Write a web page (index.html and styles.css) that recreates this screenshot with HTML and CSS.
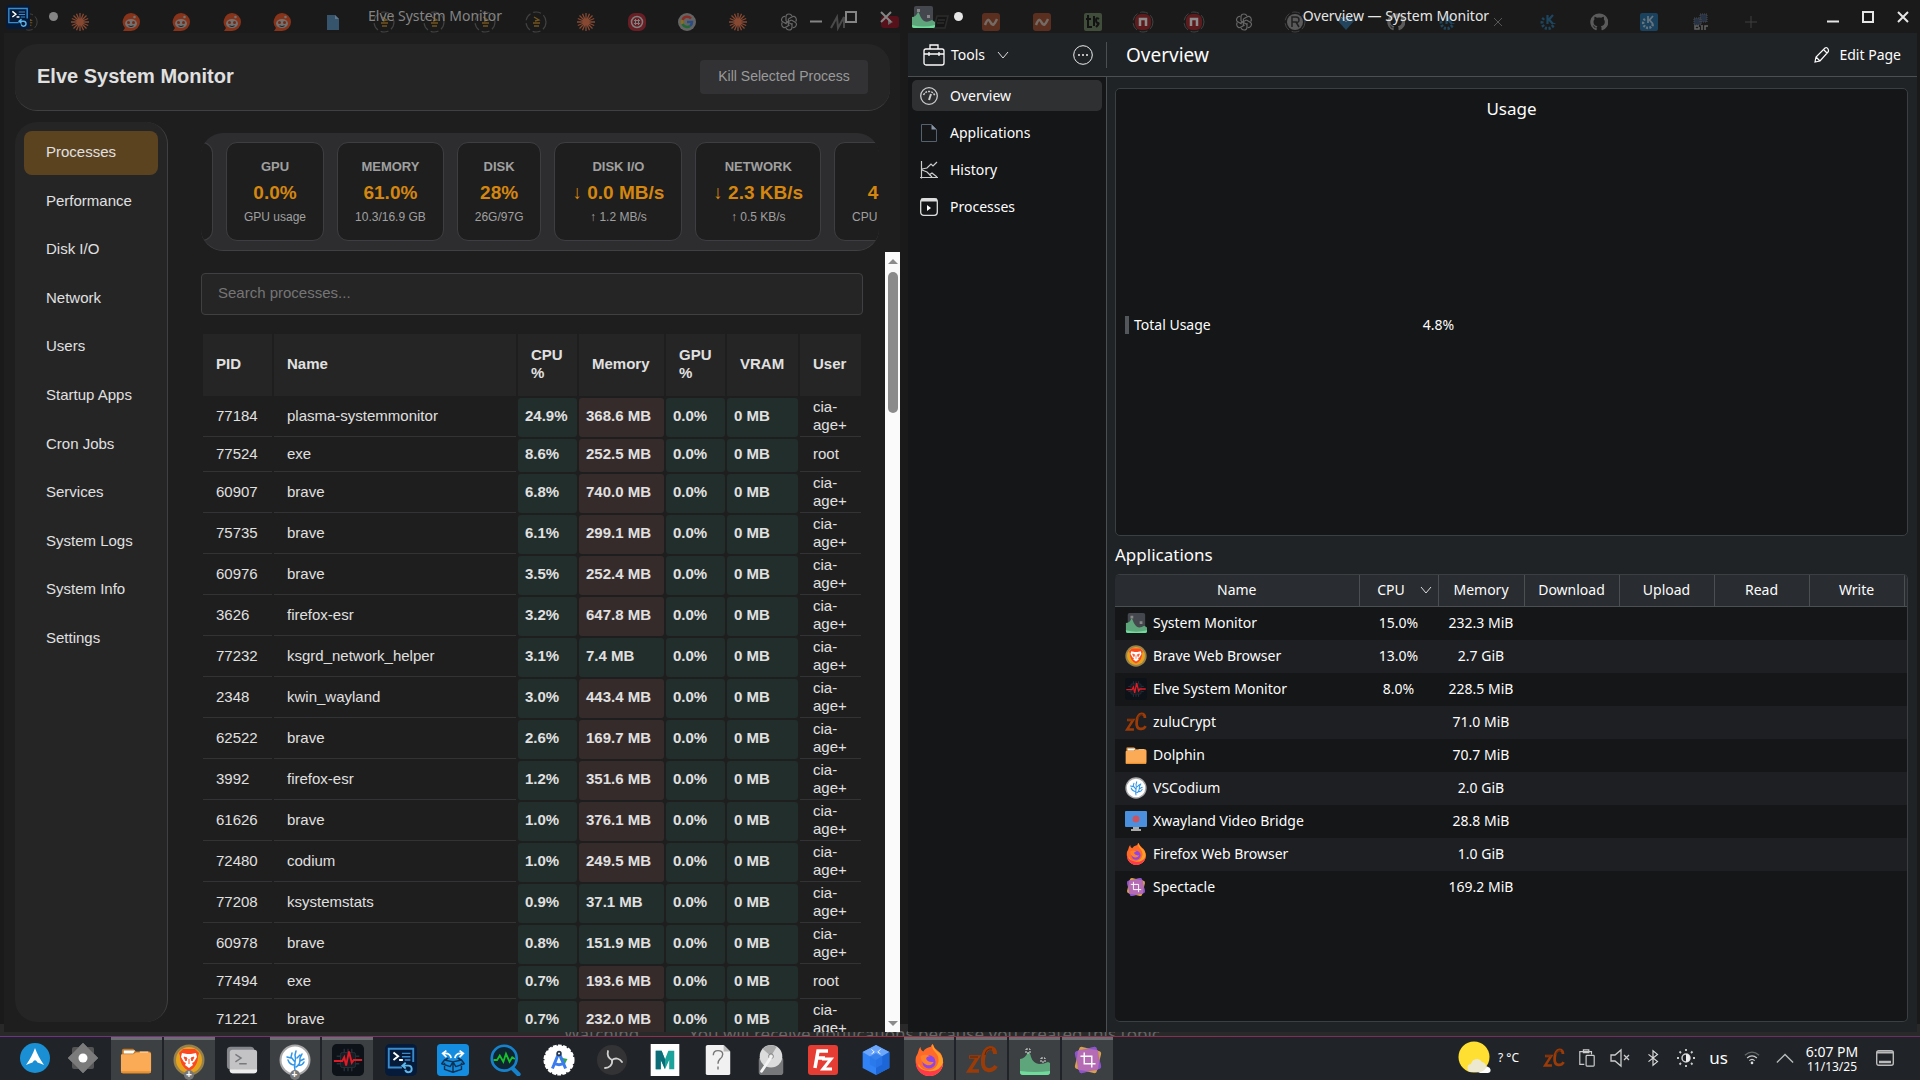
FILE: index.html
```html
<!DOCTYPE html>
<html lang="en">
<head>
<meta charset="utf-8">
<title>Desktop</title>
<link rel="stylesheet" href="styles.css">
</head>
<body>
<svg class="sprite" aria-hidden="true">
  <symbol id="claude" viewBox="0 0 18 18"><path d="M9 0v18M0 9h18M2.5 2.5l13 13M15.500 2.500l-13 13M5.500.8l7 16.400M12.500.8l-7 16.400M.8 5.500l16.400 7M.8 12.500l16.400-7" stroke="#a35438" stroke-width="1.300"/></symbol>
  <symbol id="reddit" viewBox="0 0 18 18"><path d="M9 0a9 9 0 1 1 0 18H1l2-3A9 9 0 0 1 9 0z" fill="#a33a1a"/><ellipse cx="9" cy="10.500" rx="6" ry="4.500" fill="#888"/><circle cx="6.500" cy="9.500" r="1.500" fill="#8f2f12"/><circle cx="11.500" cy="9.500" r="1.500" fill="#8f2f12"/><circle cx="12.500" cy="4" r="1.300" fill="#888"/><path d="M6.500 12.800q2.500 1.500 5 0" stroke="#222" fill="none"/></symbol>
  <symbol id="page" viewBox="0 0 18 18"><path d="M3 2h8l4 4v11H3z" fill="#3d6380"/><path d="M11 2v4h4z" fill="#6f8fa5"/></symbol>
  <symbol id="ring" viewBox="0 0 22 22"><circle cx="11" cy="11" r="10" fill="none" stroke="#4c4c4c" stroke-width="1.200" stroke-dasharray="8 3"/><path d="M9 6l5 3-4 1M8 12h7M9 15h5" stroke="#8a6420" stroke-width="1.300" fill="none"/></symbol>
  <symbol id="target" viewBox="0 0 18 18"><rect width="18" height="18" rx="7" fill="#7d2028"/><circle cx="9" cy="9" r="5.500" fill="none" stroke="#999" stroke-width="1.500"/><path d="M7.500 6v6M10.500 6v6M6 7.500h6M6 10.500h6" stroke="#999"/></symbol>
  <symbol id="google" viewBox="0 0 18 18"><circle cx="9" cy="9" r="9" fill="#777"/><g fill="none" stroke-width="2.500"><path d="M13 5.500A5 5 0 0 0 4.500 7" stroke="#a33027"/><path d="M4.500 7a5 5 0 0 0 0 4" stroke="#a98312"/><path d="M4.500 11a5 5 0 0 0 7.500 2" stroke="#247a3c"/><path d="M12 13a5 5 0 0 0 2-4H9" stroke="#2d599f"/></g></symbol>
  <symbol id="openai" viewBox="0 0 18 18"><g fill="none" stroke="#7b7b7b" stroke-width="1.200"><path d="M6 8V4q0-3 3-3 2 0 3 2M6 8l6 3.500"/><path d="M6 8V4q0-3 3-3 2 0 3 2M6 8l6 3.500" transform="rotate(60 9 9)"/><path d="M6 8V4q0-3 3-3 2 0 3 2M6 8l6 3.500" transform="rotate(120 9 9)"/><path d="M6 8V4q0-3 3-3 2 0 3 2" transform="rotate(180 9 9)"/><path d="M6 8V4q0-3 3-3 2 0 3 2" transform="rotate(240 9 9)"/><path d="M6 8V4q0-3 3-3 2 0 3 2" transform="rotate(300 9 9)"/></g></symbol>
  <symbol id="slashes" viewBox="0 0 18 18"><path d="M1 15L7 4l1 11 6-11v11" stroke="#555" stroke-width="2" fill="none"/></symbol>
  <symbol id="tube" viewBox="0 0 18 18"><rect y="3" width="18" height="12" rx="3" fill="#66101c"/><path d="M7 6l5 3-5 3z" fill="#777"/></symbol>
  <symbol id="book" viewBox="0 0 18 18"><path d="M5 3h11l-3 12H2zM6 7h7M5 10h7" stroke="#303030" stroke-width="1.500" fill="#151515"/></symbol>
  <symbol id="wave" viewBox="0 0 18 18"><rect width="18" height="18" rx="3" fill="#6b3521"/><path d="M3 12c3-8 4-5 6-2s3 2 6-4" stroke="#8c8078" stroke-width="2.500" fill="none"/></symbol>
  <symbol id="board" viewBox="0 0 18 18"><rect width="18" height="18" rx="2" fill="#4a5a44"/><path d="M4 2v12h4M2 6h5M10 3v10M15 6q-3-2-3 1t2 3-2 4" stroke="#111" stroke-width="2" fill="none"/></symbol>
  <symbol id="npm" viewBox="0 0 22 22"><circle cx="11" cy="11" r="10" fill="none" stroke="#4c4c4c" stroke-dasharray="8 3"/><rect x="3" y="3" width="16" height="16" rx="6" fill="#6e1c1e"/><path d="M8 15V8h6v7" stroke="#aaa" stroke-width="2.500" fill="none"/></symbol>
  <symbol id="rmark" viewBox="0 0 22 22"><circle cx="11" cy="11" r="8" fill="#6a6a6a"/><circle cx="11" cy="11" r="10" fill="none" stroke="#4c4c4c" stroke-dasharray="8 3"/><path d="M8 16V6h4q3 0 3 3t-3 2H8m4 0l3 5" stroke="#222" stroke-width="1.500" fill="none"/></symbol>
  <symbol id="gem" viewBox="0 0 18 18"><path d="M4 4h10l3 4-8 9-8-9z" fill="#24506e"/><path d="M4 4l5 5 5-5" stroke="#68808e" fill="none"/></symbol>
  <symbol id="github" viewBox="0 0 18 18"><path d="M9 .5a8.600 8.600 0 0 0-3 16.700c.5.100.7-.2.700-.5v-2c-2.500.5-3-1-3-1-.5-1.200-1.200-1.400-1.200-1.400 1.300-.2 2 1.200 2 1.200.8 1.300 2 1 2.400.7.100-.6.300-1 .6-1.200-2-.2-4-1-4-4.300q0-1.500 1-2.500-.4-1 .1-2.400s1-.2 2.400 1a8 8 0 0 1 4.300 0c1.500-1.200 2.400-1 2.400-1q.5 1.400.1 2.400 1 1 1 2.500c0 3.300-2 4-4 4.300.5.400.7 1 .7 1.800v2c0 .3.200.6.700.5A8.600 8.600 0 0 0 9 .5z" fill="#6c6c6c"/></symbol>
  <symbol id="kde" viewBox="0 0 18 18"><path d="M5 5a6 6 0 1 0 10 5" fill="none" stroke="#20506f" stroke-width="3" stroke-dasharray="2.200 1.500"/><path d="M8.500 2v9M14 2L10 6.500l4 4.500" stroke="#20506f" stroke-width="2.200" fill="none"/></symbol>
  <symbol id="kdebox" viewBox="0 0 18 18"><rect width="18" height="18" rx="2" fill="#1b4b6e"/><path d="M5 6a5 5 0 1 0 8 5" fill="none" stroke="#788b98" stroke-width="2.500" stroke-dasharray="2 1.300"/><path d="M8 3v7M13 3L9.500 7l3.500 4" stroke="#788b98" stroke-width="1.800" fill="none"/></symbol>
  <symbol id="gif" viewBox="0 0 18 18"><path d="M3 5h7v7H3zM9 1h7v8H9z" fill="#2c3850" stroke="#555" stroke-dasharray="1 1"/><path d="M8 13H4v3h4v-2M11 12v5M14 17v-4h3" stroke="#777" stroke-width="1.500" fill="none"/></symbol>
  <symbol id="cross" viewBox="0 0 12 12"><path d="M1 1l10 10M11 1L1 11" stroke="currentColor" stroke-width="2"/></symbol>
  <symbol id="thincross" viewBox="0 0 18 18"><path d="M5 5l8 8M13 5l-8 8" stroke="#666"/></symbol>
  <symbol id="plus" viewBox="0 0 18 18"><path d="M9 3v12M3 9h12" stroke="#484848"/></symbol>
  <symbol id="square" viewBox="0 0 12 12"><rect x="1" y="1" width="10" height="10" fill="none" stroke="currentColor" stroke-width="2"/></symbol>
  <symbol id="dash" viewBox="0 0 12 12"><path d="M0 10.500h12" stroke="currentColor" stroke-width="2"/></symbol>

  <symbol id="sysmon" viewBox="0 0 24 24"><rect x="3" y="1" width="19" height="19" rx="2" fill="#44484e"/><path d="M1 12q4 0 6-5l1 1q2 6 5 8t8-1l3 2v4q0 2-2 2H3q-2 0-2-2z" fill="#5ea57c"/><path d="M1 20q11 3 23 0v1q0 2-2 2H3q-2 0-2-2z" fill="#6fdc9c"/><path d="M6 4h3v3H6zM16 10h3v3h-3z" fill="#888"/></symbol>
  <symbol id="sysmonbare" viewBox="0 0 32 32"><path d="M1 15q5 0 8-7 2 0 3 5 2 6 8 7 5 0 9-2l2 1v9q0 3-3 3H4q-3 0-3-3z" fill="#5ea57c"/><path d="M1 27q15 2 30 0v1q0 3-3 3H4q-3 0-3-3z" fill="#6fdc9c"/><path d="M7 5h4v4H7zM22 14h4v4h-4z" fill="none" stroke="#ddd" stroke-dasharray="2 1"/></symbol>
  <symbol id="restore" viewBox="0 0 34 34"><rect width="34" height="34" rx="5" fill="#061b3a"/><path d="M30 19V5H4v20h14" fill="none" stroke="#3a8bcb" stroke-width="2"/><path d="M9 9l5 4-5 4M15 17h4" stroke="#fff" stroke-width="2" fill="none"/><path d="M18 10h9M18 13.500h9M21 17h6" stroke="#3a8bcb" stroke-width="1.500"/><path d="M19 23h6a3.500 3.500 0 1 1-3.500 4.500M22 20l-3.500 3 3.500 3" stroke="#5db5ea" stroke-width="2" fill="none"/></symbol>
  <symbol id="arch" viewBox="0 0 32 32"><circle cx="16" cy="16" r="15" fill="#1a8fd4"/><path d="M16 6c2 6 5 11 9 17q-4-2-6.500-2.500Q16 16 13.500 20.500 11 21 7 23c4-6 7-11 9-17z" fill="#fff"/></symbol>
  <symbol id="diamond" viewBox="0 0 32 32"><rect x="5" y="5" width="22" height="22" rx="2" fill="#555"/><path d="M16 1l15 15-15 15L1 16z" fill="#7b7b7b" stroke="#6b6b6b" stroke-linejoin="round"/><circle cx="16" cy="16" r="4.500" fill="#fff"/></symbol>
  <symbol id="folder" viewBox="0 0 34 30"><path d="M2 5q0-2 2-2h10l3 3h14q2 0 2 2v18H2z" fill="#bf7a2e"/><path d="M4 5h12l-2 3H4z" fill="#fff"/><path d="M21 6h9v2h-9z" fill="#ffe0b8"/><path d="M1 10q0-1 1-1h12l3-2h14q2 0 2 2v18q0 2-2 2H3q-2 0-2-2z" fill="#fbab55"/><path d="M1 27h32q0 2-2 2H3q-2 0-2-2z" fill="#e98f2c"/></symbol>
  <symbol id="brave" viewBox="0 0 32 32"><circle cx="16" cy="16" r="15.500" fill="#97824d"/><circle cx="16" cy="16" r="13" fill="#e6a41c"/><path d="M10 5h12l4 4-1 3c0 7-3 12-9 15-6-3-9-8-9-15L6 9z" fill="#fb4a22"/><path d="M9 9l5 1h4l5-1 1 4-3 5-2 1 1 2-4 3-4-3 1-2-2-1-3-5z" fill="#fff"/><path d="M11 13l3 1-1 3zM21 13l-3 1 1 3zM16 15v5" stroke="#fb4a22" fill="#fb4a22"/></symbol>
  <symbol id="terminal" viewBox="0 0 34 30"><rect x="1" y="1" width="29" height="24" rx="4" fill="#84868b"/><rect x="4" y="4" width="29" height="25" rx="3" fill="#c3c3c5"/><path d="M4 25h29v1q0 3-3 3H7q-3 0-3-3z" fill="#ededed"/><path d="M10 9l6 4-6 4M14 19h8" fill="none" stroke="#77797d" stroke-width="1.500"/></symbol>
  <symbol id="codium" viewBox="0 0 32 32"><circle cx="16" cy="16" r="15.500" fill="#a8a8a8"/><circle cx="16" cy="16" r="13.500" fill="#fff"/><path d="M16 26c-2-5 2-9 0-15l1-4M16 18l-4-5 1-4M12 14l-4-1M16 21c-4 0-6-2-7-5M17 23c4-2 4-5 4-9l2-4M21 17l4-2M19 21c3 1 5-1 6-3M18 14l3-3" stroke="#3095e8" stroke-width="1.500" fill="none" stroke-linecap="round"/></symbol>
  <symbol id="pulse" viewBox="0 0 34 34"><rect width="34" height="34" rx="5" fill="#0d1219"/><rect x="9" y="9" width="16" height="16" rx="2" fill="#171d24" stroke="#273039"/><path d="M13 5v4M17 5v4M21 5v4M13 25v4M17 25v4M21 25v4M5 13h4M5 21h4M25 13h4M25 21h4" stroke="#273039" stroke-width="1.500"/><path d="M2 18h9l2-4 2 9 3-15 3 12 2-3h9" fill="none" stroke="#e11b25" stroke-width="2"/></symbol>
  <symbol id="box" viewBox="0 0 34 34"><rect width="34" height="34" rx="4" fill="#148de0"/><g stroke="#0e3150" stroke-width="1.500" fill="none" stroke-linejoin="round"><path d="M8 20v7l9 3 9-3v-7M17 19v11M8 17l9 2 9-2-4-2M12 15l-4 2-3 4 9 3 3-5 3 5 9-3-3-4"/></g><path d="M15 15q-1-6-8-5M19 15q1-6 8-5M10 7l-4 3 4 4M24 7l4 3-4 4" stroke="#fff" stroke-width="1.800" fill="none"/></symbol>
  <symbol id="magwave" viewBox="0 0 36 36"><path d="M25 27l7 7" stroke="#1782cc" stroke-width="5" stroke-linecap="round"/><circle cx="16" cy="16" r="14" fill="#0f2530" stroke="#1782cc" stroke-width="3"/><path d="M4 18h4l3-5 4 7 3-9 4 9 3-5 3 2" stroke="#18c22c" stroke-width="2" fill="none"/></symbol>
  <symbol id="studio" viewBox="0 0 34 34"><circle cx="17" cy="17" r="15.500" fill="#fff" stroke="#fff" stroke-width="2" stroke-dasharray="4 1.500"/><path d="M17 14l9 2-4 8z" fill="#35a852"/><path d="M17 9L10 26M17 9l7 17M11 20q6 4 12 0" stroke="#3b7ded" stroke-width="3.200" fill="none"/><circle cx="17" cy="10" r="2" fill="#fff" stroke="#25364c" stroke-width="1.800"/></symbol>
  <symbol id="obs" viewBox="0 0 32 32"><circle cx="16" cy="16" r="15" fill="#333335"/><g fill="none" stroke="#d1d1d1" stroke-width="1.800" stroke-linecap="round"><path d="M16 16c-4-2-5-5-4-9"/><path d="M16 16c4-3 8-1 10 2"/><path d="M16 16c1 5-3 8-7 8"/></g></symbol>
  <symbol id="maya" viewBox="0 0 34 38"><path d="M0 0h34v38H0z" fill="#fff"/><path d="M6 8h7l4 10 4-10h7v22h-6V19l-5 11-5-11v11H6z" fill="#1ba39c"/><path d="M6 8h7l4 10v12l-5-11v11H6z" fill="#0c6d79"/></symbol>
  <symbol id="unknown" viewBox="0 0 28 34"><path d="M1 3q0-2 2-2h17l7 7v23q0 2-2 2H3q-2 0-2-2z" fill="#f1f1f1"/><path d="M20 1v7h7z" fill="#bbb"/><path d="M9 12q0-5 5-5t5 4q0 3-3 5-2 2-2 5M14 24v3" stroke="#777" stroke-width="1.500" fill="none"/></symbol>
  <symbol id="disk" viewBox="0 0 28 34"><rect x="1" y="14" width="26" height="19" rx="3" fill="#77787a"/><circle cx="14" cy="13" r="12" fill="#dcdcdc"/><path d="M14 13L5 5A12 12 0 0 1 20 3z" fill="#aaa"/><circle cx="14" cy="13" r="2.500" fill="#eee" stroke="#777"/><path d="M14 14L4 29" stroke="#f3f3f3" stroke-width="3" stroke-linecap="round"/></symbol>
  <symbol id="filezilla" viewBox="0 0 32 32"><rect x="1" y="1" width="30" height="30" rx="3" fill="#e53c34"/><path d="M8 24l3-17h10M10 14h8" stroke="#fff" stroke-width="3.500" fill="none"/><path d="M15 15h9l-8 10h9" stroke="#fff" stroke-width="3" fill="none"/></symbol>
  <symbol id="cube" viewBox="0 0 32 36"><path d="M16 1l15 8v18l-15 8-15-8V9z" fill="#3183f5"/><path d="M16 1l15 8-15 9L1 9z" fill="#6ba6fb"/><path d="M16 18l15-9v18l-15 8z" fill="#1d66d8"/><path d="M9 14l7-4 7 4v9l-7 4-7-4z" fill="#2b78ea" opacity=".8"/><path d="M11 6l3 3-3 2M21 6l-3 3 3 2" stroke="#fff" fill="none"/></symbol>
  <symbol id="firefox" viewBox="0 0 32 34"><path d="M4 10q1-5 3-7 0 4 3 5 2-4 8-5 0-2 2-3 1 4 5 7 6 4 6 12a14 14 0 0 1-29 1Q1 14 4 10z" fill="#ff6a2b"/><path d="M20 0q-2 4 2 8 5 5 4 11-2 8-10 9-8 0-11-7-1 5 2 9a14.500 14.500 0 0 0 24-10q0-8-6-12-4-3-5-8z" fill="#ff9e26"/><path d="M2 19a14.500 14.500 0 0 0 29 1q-3 9-14 9Q5 28 2 19z" fill="#ff3b4b"/><circle cx="16" cy="19" r="7" fill="#8e46e8"/><path d="M7 13q5-3 10 0-4 0-4 3 2 4 8 3-3 5-8 3-6-3-6-9z" fill="#ff8129"/></symbol>
  <symbol id="zc" viewBox="0 0 32 30"><path d="M3 12h9L3 26h10" stroke="#9b3b08" stroke-width="3.500" fill="none"/><path d="M29 9q0-6-5-6-6 1-7 11t5 11q5 1 8-4" stroke="#9b3b08" stroke-width="4" fill="none"/><path d="M4 12h8M26 4q-6-1-7 6" stroke="#5e2205" fill="none"/></symbol>
  <symbol id="spectacle" viewBox="0 0 34 34"><rect x="5" y="5" width="24" height="24" rx="3" fill="#8d54cf" transform="rotate(-14 17 17)"/><rect x="5" y="5" width="24" height="24" rx="3" fill="#d6a04e" transform="rotate(14 17 17)"/><rect x="5" y="5" width="24" height="24" rx="3" fill="#8d54cf" transform="rotate(-14 17 17)" opacity=".6"/><rect x="6" y="6" width="22" height="22" rx="3" fill="#b56cb4"/><path d="M13 9v12h12M9 13h12v12" stroke="#fff" stroke-width="1.500" fill="none"/></symbol>
  <symbol id="bridge" viewBox="0 0 22 22"><path d="M8 16h6v3h2v2H6v-2h2z" fill="#aaa"/><rect y="1" width="22" height="16" rx="1" fill="#4b90df"/><circle cx="11" cy="9" r="3.500" fill="#cb5462"/></symbol>

  <symbol id="toolbox" viewBox="0 0 22 22"><g fill="none" stroke="#fcfcfc" stroke-width="1.300"><rect x="1" y="5" width="20" height="16" rx="2"/><path d="M7 5V1h8v4M1 10h20M6 8v4M16 8v4"/></g></symbol>
  <symbol id="chevron" viewBox="0 0 12 12"><path d="M1 3l5 6 5-6" stroke="#ddd" fill="none"/></symbol>
  <symbol id="dots" viewBox="0 0 20 20"><circle cx="10" cy="10" r="9.300" stroke="#eee" fill="none"/><path d="M5 10h2M9 10h2M13 10h2" stroke="#eee" stroke-width="1.500"/></symbol>
  <symbol id="pencil" viewBox="0 0 16 16"><path d="M1 15l1-5L11 1q2-1 3 1t0 3L6 14zM2 10l4 4M10 3l3 3" stroke="#fcfcfc" fill="none" stroke-width="1.200"/></symbol>
  <symbol id="gauge" viewBox="0 0 18 18"><g fill="none" stroke="#ccc"><circle cx="9" cy="9" r="8.300" stroke-width="1.300"/><path d="M3.500 8q2-4 6-3.500T15 9" stroke-width="1.500" stroke-dasharray="2 1"/><path d="M9 13l2-6" stroke-width="2"/></g></symbol>
  <symbol id="sheet" viewBox="0 0 18 18"><path d="M1.500.5h10l5 5v12h-15z" fill="none" stroke="#556170"/><path d="M11.500.5l5 5h-5z" fill="#8795a7"/></symbol>
  <symbol id="chart" viewBox="0 0 18 18"><path d="M1.500 0v17.500M0 16.500h18M2 8l5-1 4-4 2 2 4-4M2 9l5 2 5 5M9 14l3-2 5 4" stroke="#ccc" fill="none" stroke-width="1.200"/></symbol>
  <symbol id="play" viewBox="0 0 18 18"><rect x=".7" y=".7" width="16.600" height="16.600" rx="3" stroke="#ddd" fill="none" stroke-width="1.300"/><path d="M1 2h16" stroke="#ddd" stroke-width="3"/><path d="M7 7l4 3-4 3z" fill="#fff"/></symbol>

  <symbol id="sun" viewBox="0 0 34 34"><circle cx="16" cy="16" r="15.500" fill="#ffdf31"/><path d="M14 31a4 4 0 0 1-1-8 6 6 0 0 1 11-2 5 5 0 0 1 4 4 3.500 3.500 0 0 1 2 6z" fill="#ede9d0"/><path d="M16 32q9 0 13-6a3 3 0 0 1 1 6z" fill="#fff"/></symbol>
  <symbol id="clip" viewBox="0 0 18 20"><g fill="none" stroke="#ccc" stroke-width="1.300"><path d="M6 17H1V3h13v3M5 1h6v3H5z"/><rect x="8" y="7" width="9" height="12" rx="1"/></g></symbol>
  <symbol id="mute" viewBox="0 0 20 20"><path d="M1 7h4l6-5v16l-6-5H1zM14 7l5 5M19 7l-5 5" fill="none" stroke="#ccc" stroke-width="1.300"/></symbol>
  <symbol id="bluetooth" viewBox="0 0 14 20"><path d="M2 6l10 8-5 4V2l5 4-10 8" fill="none" stroke="#ddd" stroke-width="1.300"/></symbol>
  <symbol id="bright" viewBox="0 0 20 20"><circle cx="10" cy="10" r="4" fill="none" stroke="#ccc" stroke-width="1.500"/><path d="M10 6a4 4 0 0 1 0 8z" fill="#eee"/><path d="M10 1v2M10 17v2M1 10h2M17 10h2M3.500 3.500l1.500 1.500M15 15l1.500 1.500M16.500 3.500L15 5M5 15l-1.500 1.500" stroke="#ccc" stroke-width="1.800"/></symbol>
  <symbol id="wifi" viewBox="0 0 18 16"><g fill="none" stroke-width="1.400"><path d="M1 5q8-7 16 0" stroke="#666"/><path d="M3.500 8q5.500-5 11 0M6 11q3-3 6 0" stroke="#ccc"/></g><circle cx="9" cy="13.500" r="1.500" fill="#ddd"/></symbol>
  <symbol id="up" viewBox="0 0 20 12"><path d="M1 11l9-9 9 9" fill="none" stroke="#bbb" stroke-width="1.500"/></symbol>
  <symbol id="peek" viewBox="0 0 18 16"><rect x=".7" y=".7" width="16.600" height="14.600" rx="2" fill="none" stroke="#bbb" stroke-width="1.400"/><path d="M1 2.500h16" stroke="#bbb" stroke-width="2"/><path d="M3 12h12" stroke="#bbb" stroke-width="2.500"/></symbol>
</svg>

<div class="backdrop" aria-hidden="true">
  <div class="tabs">
    <svg><use href="#ring"/></svg><svg><use href="#claude"/></svg><svg><use href="#reddit"/></svg><svg><use href="#reddit"/></svg><svg><use href="#reddit"/></svg><svg><use href="#reddit"/></svg><svg><use href="#page"/></svg><svg class="big"><use href="#ring"/></svg><svg class="big"><use href="#ring"/></svg><svg class="big"><use href="#ring"/></svg><svg class="big"><use href="#ring"/></svg><svg><use href="#claude"/></svg><svg><use href="#target"/></svg><svg><use href="#google"/></svg><svg><use href="#claude"/></svg><svg><use href="#openai"/></svg><svg><use href="#slashes"/></svg><svg><use href="#tube"/></svg><svg><use href="#book"/></svg><svg><use href="#wave"/></svg><svg><use href="#wave"/></svg><svg><use href="#board"/></svg><svg class="big"><use href="#npm"/></svg><svg class="big"><use href="#npm"/></svg><svg><use href="#openai"/></svg><svg class="big"><use href="#rmark"/></svg><svg><use href="#gem"/></svg><svg><use href="#github"/></svg><svg><use href="#kde"/></svg><svg><use href="#thincross"/></svg><svg><use href="#kde"/></svg><svg><use href="#github"/></svg><svg><use href="#kdebox"/></svg><svg><use href="#gif"/></svg><svg><use href="#plus"/></svg>
  </div>
  <div class="notice"><span>Watching&nbsp; ⌄</span><span>You will receive notifications because you created this topic.</span></div>
</div>

<main class="desktop">
  <section class="window elve">
    <header class="titlebar dim">
      <svg class="app"><use href="#restore"/></svg>
      <span class="pin"></span>
      <span class="caption">Elve System Monitor</span>
      <button aria-label="Minimize"><svg><use href="#dash"/></svg></button>
      <button aria-label="Maximize"><svg><use href="#square"/></svg></button>
      <button aria-label="Close"><svg><use href="#cross"/></svg></button>
    </header>
    <div class="elve-body">
      <div class="elve-head"><h1>Elve System Monitor</h1><button class="kill">Kill Selected Process</button></div>
      <div class="elve-main">
        <div class="elve-side">
          <nav class="elve-nav">
            <a class="on" href="#">Processes</a><a href="#">Performance</a><a href="#">Disk I/O</a><a href="#">Network</a><a href="#">Users</a><a href="#">Startup Apps</a><a href="#">Cron Jobs</a><a href="#">Services</a><a href="#">System Logs</a><a href="#">System Info</a><a href="#">Settings</a>
          </nav>
        </div>
        <div class="elve-content">
          <div class="stats">
            <div class="stat edge"></div>
            <div class="stat"><h2>GPU</h2><b>0.0%</b><span>GPU usage</span></div>
            <div class="stat"><h2>MEMORY</h2><b>61.0%</b><span>10.3/16.9 GB</span></div>
            <div class="stat"><h2>DISK</h2><b>28%</b><span>26G/97G</span></div>
            <div class="stat"><h2>DISK I/O</h2><b>↓ 0.0 MB/s</b><span>↑ 1.2 MB/s</span></div>
            <div class="stat"><h2>NETWORK</h2><b>↓ 2.3 KB/s</b><span>↑ 0.5 KB/s</span></div>
            <div class="stat last"><h2>&nbsp;</h2><b>4</b><span>CPU</span></div>
          </div>
          <div class="scroll">
            <div class="list">
              <input class="search" type="text" placeholder="Search processes..." aria-label="Search processes">
              <table class="procs">
                <colgroup><col class="c-pid"><col><col class="c-pct"><col class="c-mem"><col class="c-pct"><col class="c-vram"><col class="c-user"></colgroup>
                <thead><tr><th>PID</th><th>Name</th><th>CPU %</th><th>Memory</th><th>GPU %</th><th>VRAM</th><th>User</th></tr></thead>
                <tbody>
                  <tr><td>77184</td><td>plasma-systemmonitor</td><td class="lo">24.9%</td><td class="hi">368.6 MB</td><td class="lo">0.0%</td><td class="lo">0 MB</td><td>cia-age+</td></tr>
                  <tr><td>77524</td><td>exe</td><td class="lo">8.6%</td><td class="hi">252.5 MB</td><td class="lo">0.0%</td><td class="lo">0 MB</td><td>root</td></tr>
                  <tr><td>60907</td><td>brave</td><td class="lo">6.8%</td><td class="hi">740.0 MB</td><td class="lo">0.0%</td><td class="lo">0 MB</td><td>cia-age+</td></tr>
                  <tr><td>75735</td><td>brave</td><td class="lo">6.1%</td><td class="hi">299.1 MB</td><td class="lo">0.0%</td><td class="lo">0 MB</td><td>cia-age+</td></tr>
                  <tr><td>60976</td><td>brave</td><td class="lo">3.5%</td><td class="hi">252.4 MB</td><td class="lo">0.0%</td><td class="lo">0 MB</td><td>cia-age+</td></tr>
                  <tr><td>3626</td><td>firefox-esr</td><td class="lo">3.2%</td><td class="hi">647.8 MB</td><td class="lo">0.0%</td><td class="lo">0 MB</td><td>cia-age+</td></tr>
                  <tr><td>77232</td><td>ksgrd_network_helper</td><td class="lo">3.1%</td><td class="lo">7.4 MB</td><td class="lo">0.0%</td><td class="lo">0 MB</td><td>cia-age+</td></tr>
                  <tr><td>2348</td><td>kwin_wayland</td><td class="lo">3.0%</td><td class="hi">443.4 MB</td><td class="lo">0.0%</td><td class="lo">0 MB</td><td>cia-age+</td></tr>
                  <tr><td>62522</td><td>brave</td><td class="lo">2.6%</td><td class="hi">169.7 MB</td><td class="lo">0.0%</td><td class="lo">0 MB</td><td>cia-age+</td></tr>
                  <tr><td>3992</td><td>firefox-esr</td><td class="lo">1.2%</td><td class="hi">351.6 MB</td><td class="lo">0.0%</td><td class="lo">0 MB</td><td>cia-age+</td></tr>
                  <tr><td>61626</td><td>brave</td><td class="lo">1.0%</td><td class="hi">376.1 MB</td><td class="lo">0.0%</td><td class="lo">0 MB</td><td>cia-age+</td></tr>
                  <tr><td>72480</td><td>codium</td><td class="lo">1.0%</td><td class="hi">249.5 MB</td><td class="lo">0.0%</td><td class="lo">0 MB</td><td>cia-age+</td></tr>
                  <tr><td>77208</td><td>ksystemstats</td><td class="lo">0.9%</td><td class="lo">37.1 MB</td><td class="lo">0.0%</td><td class="lo">0 MB</td><td>cia-age+</td></tr>
                  <tr><td>60978</td><td>brave</td><td class="lo">0.8%</td><td class="lo">151.9 MB</td><td class="lo">0.0%</td><td class="lo">0 MB</td><td>cia-age+</td></tr>
                  <tr><td>77494</td><td>exe</td><td class="lo">0.7%</td><td class="hi">193.6 MB</td><td class="lo">0.0%</td><td class="lo">0 MB</td><td>root</td></tr>
                  <tr><td>71221</td><td>brave</td><td class="lo">0.7%</td><td class="hi">232.0 MB</td><td class="lo">0.0%</td><td class="lo">0 MB</td><td>cia-age+</td></tr>
                </tbody>
              </table>
            </div>
            <div class="bar"><i class="arrow-up"></i><i class="thumb"></i><i class="arrow-down"></i></div>
          </div>
        </div>
      </div>
    </div>
  </section>

  <div class="between" aria-hidden="true"></div>

  <section class="window plasma">
    <header class="titlebar">
      <svg class="app"><use href="#sysmon"/></svg>
      <span class="pin"></span>
      <span class="caption">Overview — System Monitor</span>
      <button aria-label="Minimize"><svg><use href="#dash"/></svg></button>
      <button aria-label="Maximize"><svg><use href="#square"/></svg></button>
      <button aria-label="Close"><svg><use href="#cross"/></svg></button>
    </header>
    <div class="plasma-body">
      <div class="toolbar">
        <div class="tools">
          <button class="flat"><svg class="i22"><use href="#toolbox"/></svg>Tools<svg class="i12"><use href="#chevron"/></svg></button>
          <button class="flat" aria-label="More"><svg class="i20"><use href="#dots"/></svg></button>
        </div>
        <h1>Overview</h1>
        <button class="flat edit"><svg class="i16"><use href="#pencil"/></svg>Edit Page</button>
      </div>
      <div class="plasma-main">
        <nav class="plasma-nav">
          <a class="on" href="#"><svg class="i18"><use href="#gauge"/></svg>Overview</a>
          <a href="#"><svg class="i18"><use href="#sheet"/></svg>Applications</a>
          <a href="#"><svg class="i18"><use href="#chart"/></svg>History</a>
          <a href="#"><svg class="i18"><use href="#play"/></svg>Processes</a>
        </nav>
        <div class="page">
          <div class="usage">
            <h2>Usage</h2>
            <div class="legend"><i></i><span>Total Usage</span><span>4.8%</span></div>
          </div>
          <h2 class="apps-title">Applications</h2>
          <div class="apps-frame">
            <table class="apps">
              <colgroup><col><col class="a-cpu"><col class="a-mem"><col class="a-io"><col class="a-io"><col class="a-io"><col class="a-io"><col class="a-end"></colgroup>
              <thead><tr><th>Name</th><th><span class="sort">CPU<svg class="i12"><use href="#chevron"/></svg></span></th><th>Memory</th><th>Download</th><th>Upload</th><th>Read</th><th>Write</th><th></th></tr></thead>
              <tbody>
                <tr><td><svg><use href="#sysmon"/></svg>System Monitor</td><td>15.0%</td><td>232.3 MiB</td><td colspan="5"></td></tr>
                <tr><td><svg><use href="#brave"/></svg>Brave Web Browser</td><td>13.0%</td><td>2.7 GiB</td><td colspan="5"></td></tr>
                <tr><td><svg><use href="#pulse"/></svg>Elve System Monitor</td><td>8.0%</td><td>228.5 MiB</td><td colspan="5"></td></tr>
                <tr><td><svg><use href="#zc"/></svg>zuluCrypt</td><td></td><td>71.0 MiB</td><td colspan="5"></td></tr>
                <tr><td><svg><use href="#folder"/></svg>Dolphin</td><td></td><td>70.7 MiB</td><td colspan="5"></td></tr>
                <tr><td><svg><use href="#codium"/></svg>VSCodium</td><td></td><td>2.0 GiB</td><td colspan="5"></td></tr>
                <tr><td><svg><use href="#bridge"/></svg>Xwayland Video Bridge</td><td></td><td>28.8 MiB</td><td colspan="5"></td></tr>
                <tr><td><svg><use href="#firefox"/></svg>Firefox Web Browser</td><td></td><td>1.0 GiB</td><td colspan="5"></td></tr>
                <tr><td><svg><use href="#spectacle"/></svg>Spectacle</td><td></td><td>169.2 MiB</td><td colspan="5"></td></tr>
              </tbody>
            </table>
          </div>
        </div>
      </div>
    </div>
  </section>
</main>

<footer class="taskbar">
  <button class="launch" aria-label="Application launcher"><svg class="i32"><use href="#arch"/></svg></button>
  <button class="launch" aria-label="Show windows"><svg class="i32"><use href="#diamond"/></svg></button>
  <div class="tasks">
    <button class="open" aria-label="Dolphin"><svg><use href="#folder"/></svg></button>
    <button class="open many" aria-label="Brave"><svg><use href="#brave"/></svg></button>
    <button aria-label="Konsole"><svg><use href="#terminal"/></svg></button>
    <button class="open many" aria-label="VSCodium"><svg><use href="#codium"/></svg></button>
    <button class="open" aria-label="Elve System Monitor"><svg><use href="#pulse"/></svg></button>
    <button aria-label="Restore"><svg><use href="#restore"/></svg></button>
    <button aria-label="Archive box"><svg><use href="#box"/></svg></button>
    <button aria-label="System activity"><svg><use href="#magwave"/></svg></button>
    <button aria-label="Android Studio"><svg><use href="#studio"/></svg></button>
    <button aria-label="OBS Studio"><svg><use href="#obs"/></svg></button>
    <button aria-label="Maya"><svg><use href="#maya"/></svg></button>
    <button aria-label="Unknown file"><svg><use href="#unknown"/></svg></button>
    <button aria-label="Disks"><svg><use href="#disk"/></svg></button>
    <button aria-label="FileZilla"><svg><use href="#filezilla"/></svg></button>
    <button aria-label="Virtual box"><svg><use href="#cube"/></svg></button>
    <button class="open" aria-label="Firefox"><svg><use href="#firefox"/></svg></button>
    <button class="open" aria-label="zuluCrypt"><svg><use href="#zc"/></svg></button>
    <button class="open" aria-label="System Monitor"><svg><use href="#sysmonbare"/></svg></button>
    <button class="open" aria-label="Spectacle"><svg><use href="#spectacle"/></svg></button>
  </div>
  <div class="tray">
    <div class="weather"><svg class="i34"><use href="#sun"/></svg>? °C</div>
    <span><svg class="i22"><use href="#zc"/></svg></span>
    <span><svg class="i18"><use href="#clip"/></svg></span>
    <span><svg class="i20"><use href="#mute"/></svg></span>
    <span><svg class="i18"><use href="#bluetooth"/></svg></span>
    <span><svg class="i20"><use href="#bright"/></svg></span>
    <span class="kb">us</span>
    <span><svg class="i16"><use href="#wifi"/></svg></span>
    <span><svg class="i18"><use href="#up"/></svg></span>
    <div class="clock"><b>6:07 PM</b><small>11/13/25</small></div>
    <button class="peek" aria-label="Show desktop"><svg class="i18"><use href="#peek"/></svg></button>
  </div>
</footer>
</body>
</html>
```
FILE: styles.css
```css
* { box-sizing: border-box; }

body {
  margin: 0;
  height: 100vh;
  display: flex;
  flex-direction: column;
  overflow: hidden;
  background: #1a1a1a;
  color: #fcfcfc;
  font: 14px/20px "Noto Sans", sans-serif;
}

h1, h2 { margin: 0; font-weight: normal; }
a { color: inherit; text-decoration: none; }
button { border: 0; padding: 0; background: none; color: inherit; font: inherit; }
svg { display: block; flex: none; }
.sprite { position: absolute; width: 0; height: 0; }
.i12 { width: 12px; height: 12px; }
.i16 { width: 16px; height: 16px; }
.i18 { width: 18px; height: 18px; }
.i20 { width: 20px; height: 20px; }
.i22 { width: 22px; height: 22px; }
.i32 { width: 32px; height: 32px; }
.i34 { width: 34px; height: 34px; }

/* browser window showing through behind the two monitors */
.backdrop {
  position: absolute;
  inset: 0 0 44px;
  display: flex;
  flex-direction: column;
  justify-content: space-between;
  overflow: hidden;
}
.tabs {
  display: grid;
  grid-template-columns: repeat(35, 1fr);
  place-items: center;
  width: 1772px;
  height: 44px;
  margin-left: 4px;
  opacity: .8;
}
.tabs svg { width: 18px; height: 18px; }
.tabs .big { width: 22px; height: 22px; }
.notice {
  display: flex;
  gap: 27px;
  height: 12px;
  padding-left: 564px;
  background: #292929;
  color: #666;
  font-size: 17px;
  line-height: 20px;
}

.desktop {
  position: relative;
  flex: 1;
  min-height: 0;
  display: grid;
  grid-template-columns: 903fr 2px 1015fr;
  padding-bottom: 4px;
}
.window { display: flex; flex-direction: column; min-width: 0; min-height: 0; }
.between { margin-top: 33px; }

.titlebar { display: flex; align-items: center; height: 33px; color: #e6e6e6; }
.titlebar .app { width: 24px; height: 24px; margin: 0 6px; }
.titlebar .pin { width: 9px; height: 9px; margin: 0 14px 0 13px; border-radius: 50%; background: currentColor; }
.titlebar .caption { flex: 1; padding-bottom: 2px; text-align: center; }
.titlebar button { display: grid; place-items: center; width: 35px; height: 33px; }
.titlebar button svg { width: 12px; height: 12px; }
.titlebar.dim { color: #858585; }

/* Elve System Monitor */
.elve-body {
  flex: 1;
  min-height: 0;
  display: flex;
  flex-direction: column;
  margin: 0 3px 0 4px;
  background: #1e1e1e;
  color: #e0e0e0;
  font: 15px/18px "Liberation Sans", sans-serif;
}
.elve-head {
  display: flex;
  align-items: center;
  justify-content: space-between;
  height: 67px;
  margin: 11px 10px 0 11px;
  padding: 0 22px;
  border-bottom: 1px solid #404042;
  border-radius: 22px;
  background: #252526;
}
.elve-head h1 { padding-bottom: 2px; font-size: 20px; font-weight: bold; }
.kill { width: 168px; height: 34px; padding-bottom: 2px; border-radius: 4px; background: #323235; color: #9a9a9a; font-size: 14px; }
.elve-main { flex: 1; min-height: 0; display: flex; }
.elve-side {
  width: 153px;
  margin: 11px 0 10px 11px;
  padding: 9px;
  border-right: 1px solid #404042;
  border-radius: 22px;
  background: #252526;
}
.elve-nav { display: flex; flex-direction: column; justify-content: space-between; height: 530px; }
.elve-nav a { padding: 12px 22px 14px; line-height: 18px; border-radius: 8px; }
.elve-nav .on { background: #5c4320; }
.elve-content { flex: 1; min-width: 0; display: flex; flex-direction: column; padding: 22px 0 0 33px; }
.stats {
  display: flex;
  gap: 13px;
  height: 118px;
  margin: 0 21px 1px 0;
  padding: 9px 0;
  overflow: hidden;
  border-bottom: 1px solid #404042;
  border-radius: 22px;
  background: #2d2d30;
}
.stat {
  flex: none;
  display: flex;
  flex-direction: column;
  align-items: center;
  padding: 15px 17px;
  border: 1px solid #3e3e42;
  border-radius: 11px;
  background: #1e1e1e;
  color: #a0a0a0;
  font-size: 12px;
}
.stat h2 { font-size: 13px; line-height: 18px; font-weight: bold; }
.stat b { color: #d5860f; font-size: 19px; line-height: 34px; margin: 0 0 -2px; }
.edge { width: 12px; padding: 0; border-left: 0; border-radius: 0 11px 11px 0; }
.last { width: 78px; }
.last span { align-self: flex-start; }
.scroll { flex: 1; min-height: 0; display: flex; overflow: hidden; }
.list { flex: 1; min-width: 0; padding: 21px 22px 0 0; }
.search {
  display: block;
  width: 100%;
  height: 42px;
  padding: 0 16px 4px;
  border: 1px solid #404042;
  border-radius: 4px;
  background: #252526;
  color: #e0e0e0;
  font: inherit;
}
.search::placeholder { color: #757575; opacity: 1; }
.procs { width: 100%; margin-top: 17px; table-layout: fixed; border-collapse: separate; border-spacing: 2px; }
.c-pid { width: 69px; }
.c-pct { width: 59px; }
.c-mem { width: 85px; }
.c-vram { width: 71px; }
.c-user { width: 61px; }
.procs th { height: 62px; padding: 0 12px 3px 13px; background: #252526; text-align: left; }
.procs td { height: 33px; padding: 0 12px 2px 13px; border-bottom: 1px solid #333336; }
.procs .lo, .procs .hi { padding: 0 6px 3px 7px; border: 0; border-radius: 3px; font-weight: bold; white-space: nowrap; }
.procs .lo { background: #222e2c; }
.procs .hi { background: #362b2b; }

.bar { display: flex; flex-direction: column; align-items: center; width: 15px; padding: 7px 0 6px; background: #fafafa; }
.arrow-up, .arrow-down { border: 5px solid transparent; }
.arrow-up { border-top: 0; border-bottom-color: #8b8b8b; }
.arrow-down { border-bottom: 0; border-top-color: #8b8b8b; margin-top: auto; }
.thumb { width: 10px; height: 141px; margin-top: 8px; border-radius: 5px; background: #8b8b8b; }

/* Plasma System Monitor */
.plasma-body { flex: 1; min-height: 0; display: flex; flex-direction: column; margin: 0 3px; background: #202326; }
.toolbar { display: flex; align-items: center; height: 44px; border-bottom: 1px solid #4b4f52; }
.flat { display: flex; align-items: center; gap: 6px; }
.tools {
  display: flex;
  align-items: center;
  justify-content: space-between;
  width: 199px;
  height: 26px;
  padding: 0 13px 0 15px;
  border-right: 1px solid #4b4f52;
}
.tools .i12 { margin-left: 6px; }
.toolbar h1 { flex: 1; padding-left: 19px; font-size: 19px; }
.edit { gap: 9px; margin-right: 16px; }
.plasma-main { flex: 1; min-height: 0; display: flex; }
.plasma-nav {
  display: flex;
  flex-direction: column;
  gap: 6px;
  width: 199px;
  padding: 3px 4px;
  border-right: 1px solid #4b4f52;
  background: #141618;
}
.plasma-nav a { display: flex; align-items: center; gap: 12px; height: 31px; padding: 0 8px; border-radius: 5px; }
.plasma-nav .on { background: #2f3032; }
.page { flex: 1; min-width: 0; display: flex; flex-direction: column; padding: 11px 9px 10px 8px; }
.usage { display: flex; flex-direction: column; height: 448px; border: 1px solid #3b3f42; border-radius: 5px; background: #141618; }
.usage h2 { height: 42px; font-size: 17px; line-height: 40px; text-align: center; }
.legend { flex: 1; display: flex; align-items: center; width: 43%; padding: 0 2px 17px 9px; }
.legend i { width: 4px; height: 18px; margin-right: 5px; background: #53565a; }
.legend span:last-child { margin-left: auto; }
.apps-title { font-size: 17px; line-height: 38px; }
.apps-frame { flex: 1; min-height: 0; border: 1px solid #3b3f42; border-left: 0; border-radius: 5px; background: #141618; overflow: hidden; }
.apps { width: 100%; table-layout: fixed; border-collapse: collapse; }
.a-cpu { width: 79px; }
.a-mem { width: 86px; }
.a-io { width: 95px; }
.a-end { width: 3px; }
.apps th { height: 31px; padding: 0; border-right: 1px solid #4b4f52; border-bottom: 1px solid #4b4f52; background: #292c30; font-weight: normal; }
.apps th:last-child { border-right: 0; }
.sort { display: flex; align-items: center; justify-content: center; gap: 15px; padding-left: 12px; }
.apps td { height: 33px; padding: 0; text-align: center; }
.apps td:first-child { display: flex; align-items: center; gap: 6px; padding-left: 10px; }
.apps td svg { width: 22px; height: 22px; }
.apps tbody tr:nth-child(even) { background: #1d1f22; }

/* panel */
.taskbar { position: relative; display: flex; height: 44px; padding-left: 11px; background: #202428; }
.taskbar::before {
  content: "";
  position: absolute;
  inset: 0 0 auto;
  height: 1px;
  background: linear-gradient(90deg, #6f3389, #8a2f55 30%, #a03040 45%, #7a2f5c 70%, #6a2f66);
}
.launch { display: grid; place-items: center; width: 48px; }
.launch + .launch { margin-right: 4px; }
.tasks { display: grid; grid-template-columns: repeat(19, 1fr); gap: 2px; width: 1002px; padding-top: 1px; }
.tasks button { display: grid; place-items: center; border-top: 3px solid transparent; }
.tasks svg { width: 32px; height: 32px; }
.tasks .open { border-color: #6b6e70; background: #3c4043; }
.many { position: relative; }
.many::after {
  content: "+";
  position: absolute;
  left: 20px;
  bottom: 0;
  width: 10px;
  height: 10px;
  border-radius: 50%;
  background: #777;
  font: bold 10px/10px "Liberation Sans", sans-serif;
}
.tray { display: flex; align-items: center; margin-left: auto; }
.tray span { display: grid; place-items: center; width: 33px; }
.weather { display: flex; align-items: center; gap: 6px; width: 79px; font-size: 12px; }
.tray .kb { font-size: 17px; }
.clock { display: flex; flex-direction: column; align-items: center; width: 62px; }
.clock b { font-weight: normal; font-size: 14px; line-height: 16px; }
.clock small { font-size: 12px; line-height: 13px; }
.peek { display: grid; place-items: center; width: 57px; padding-right: 13px; }
```
